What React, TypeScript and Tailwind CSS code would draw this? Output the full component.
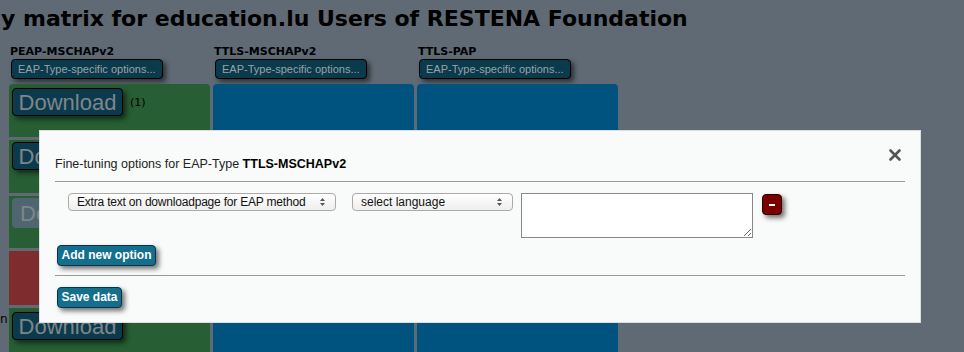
import { X } from 'lucide-react';

const ui = { fontFamily: '"DejaVu Sans", "Liberation Sans", sans-serif' };
const helv = { fontFamily: '"Liberation Sans", Arial, sans-serif' };

function PageButton({ children }: { children: React.ReactNode }) {
  return (
    <div className="h-[20px] w-[152px] whitespace-nowrap rounded-[4px] border border-black bg-[#0b3a4c] px-[6px] text-[11px] leading-[18px] text-[#99a3a7] shadow-[3px_3px_5px_rgba(0,0,0,0.55)]" style={helv}>
      {children}
    </div>
  );
}

function DownloadBtn() {
  return (
    <div className="flex h-[28px] w-[111px] items-center justify-center rounded-[4px] border border-black bg-[#0b3a4c] text-[22px] text-[#7e8689] shadow-[3px_3px_5px_rgba(0,0,0,0.55)]" style={helv}>
      Download
    </div>
  );
}

function Column({ name, children }: { name: string; children: React.ReactNode }) {
  return (
    <div className="flex w-[201px] flex-col">
      <div className="pl-[1px] pt-[1px] text-[11px] font-bold leading-[13px] text-black" style={ui}>{name}</div>
      <div className="ml-[2px] mt-[1px]">
        <PageButton>EAP-Type-specific options...</PageButton>
      </div>
      <div className="mt-[5px] flex flex-col gap-[3px]">{children}</div>
    </div>
  );
}

function Updown() {
  return (
    <svg width="7" height="10" viewBox="0 0 7 10" className="shrink-0">
      <path d="M3.5 1 L6 4 H1 Z" fill="#555" />
      <path d="M3.5 9 L6 6 H1 Z" fill="#555" />
    </svg>
  );
}

function ModalButton({ children, w }: { children: React.ReactNode; w: string }) {
  return (
    <button className={`h-[21px] ${w} whitespace-nowrap rounded-[4px] border border-[#0b3345] bg-[#146e8d] text-[12px] font-bold leading-[19px] text-white shadow-[3px_3px_5px_rgba(0,0,0,0.55)]`} style={helv}>
      {children}
    </button>
  );
}

export default function App() {
  return (
    <div className="relative h-[352px] w-[964px] overflow-hidden bg-[#5f6a74]">
      <h1 className="h-[44px] whitespace-nowrap pl-[1px] pt-[5px] text-[22px] font-bold leading-[28px] text-black" style={ui}>
        y matrix for education.lu Users of RESTENA Foundation
      </h1>
      <div className="flex gap-[3px] pl-[9px]">
        <Column name="PEAP-MSCHAPv2">
          <div className="h-[53px] rounded-t-[4px] bg-[#275e33] px-[3px] pt-[4px]">
            <div className="flex items-center gap-[7px]">
              <DownloadBtn />
              <span className="pt-[2px] text-[11px] text-black" style={ui}>(1)</span>
            </div>
          </div>
          <div className="h-[53px] bg-[#275e33] px-[3px] pt-[2px]">
            <DownloadBtn />
          </div>
          <div className="h-[52px] bg-[#275e33] px-[3px] pt-[2px]">
            <div className="flex h-[30px] w-[111px] items-center rounded-[4px] bg-[#4f6670] pl-[8px] text-[22px] text-[#7e8689]" style={helv}>
              Download
            </div>
          </div>
          <div className="h-[54px] bg-[#7e2c2d]" />
          <div className="h-[60px] bg-[#275e33] px-[3px] pt-[4px]">
            <DownloadBtn />
          </div>
        </Column>
        <Column name="TTLS-MSCHAPv2">
          <div className="h-[280px] rounded-t-[4px] bg-[#01537f]" />
        </Column>
        <Column name="TTLS-PAP">
          <div className="h-[280px] rounded-t-[4px] bg-[#01537f]" />
        </Column>
      </div>
      <span className="absolute left-0 top-[310px] text-[12px] text-black" style={ui}>n</span>

      <div className="absolute left-[39px] top-[130px] h-[193px] w-[882px] border border-[#dedede] bg-[#f9fbfa] px-[15px]" style={helv}>
        <div className="flex h-[50px] items-end pb-[10px]">
          <div className="whitespace-nowrap text-[12.5px] leading-[14px] text-[#222]">
            Fine-tuning options for EAP-Type <b className="text-black">TTLS-MSCHAPv2</b>
          </div>
        </div>
        <X size={18} strokeWidth={3.5} className="absolute right-[16px] top-[15px] text-[#555]" />
        <div className="h-px bg-[#999]" />
        <div className="flex items-start pl-[13px] pt-[11px]">
          <div className="flex h-[18px] w-[268px] items-center justify-between whitespace-nowrap rounded-[4px] border border-[#aaa] bg-gradient-to-b from-white to-[#eee] pl-[8px] pr-[9px] text-[12px] tracking-[-0.2px] text-[#111]">
            <span>Extra text on downloadpage for EAP method</span>
            <Updown />
          </div>
          <div className="ml-[16px] flex h-[18px] w-[161px] items-center justify-between whitespace-nowrap rounded-[4px] border border-[#aaa] bg-gradient-to-b from-white to-[#eee] pl-[8px] pr-[9px] text-[12px] text-[#111]">
            <span>select language</span>
            <Updown />
          </div>
          <textarea className="ml-[8px] h-[45px] w-[232px] border border-[#888] bg-white" />
          <button className="ml-[9px] mt-[1px] flex h-[21px] w-[20px] items-center justify-center rounded-[4px] border border-[#2a0000] bg-[#7a0000] shadow-[3px_3px_5px_rgba(0,0,0,0.55)]">
            <span className="h-[2px] w-[6px] bg-white" />
          </button>
        </div>
        <div className="pl-[2px] pt-[4px]">
          <ModalButton w="w-[99px]">Add new option</ModalButton>
        </div>
        <div className="mt-[9px] h-px bg-[#999]" />
        <div className="pl-[2px] pt-[8px]">
          <ModalButton w="w-[65px]">Save data</ModalButton>
        </div>
      </div>
    </div>
  );
}
